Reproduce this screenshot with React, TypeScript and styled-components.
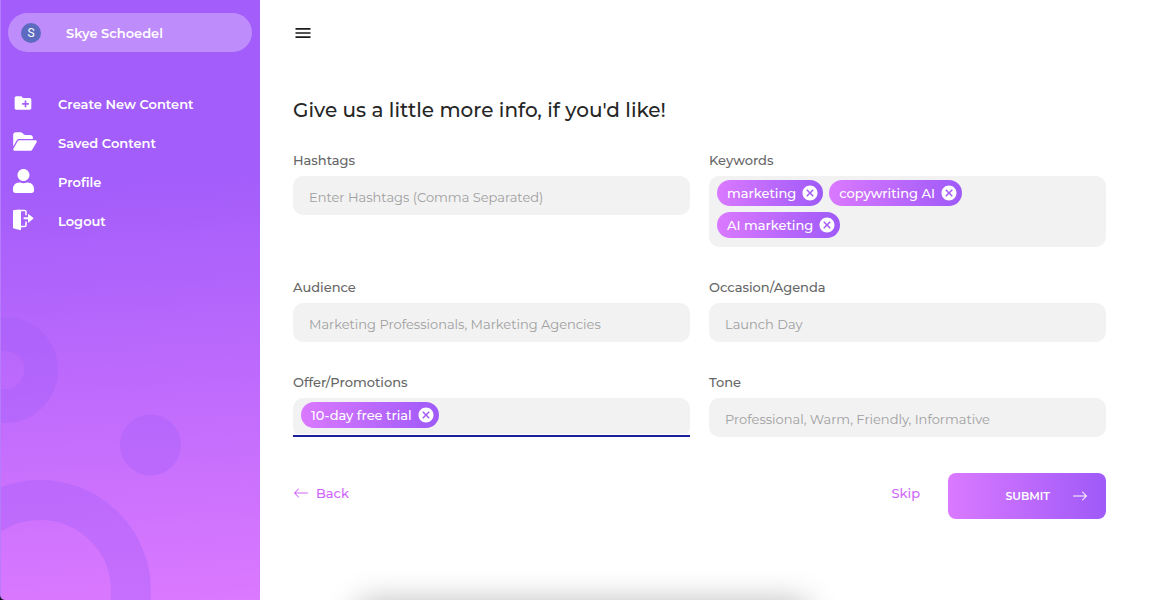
import React, { useState } from "react";
import styled, { createGlobalStyle, css } from "styled-components";
import { MdCancel, MdCreateNewFolder, MdMenu } from "react-icons/md";
import { FaUser } from "react-icons/fa";
import { FaFolderOpen } from "react-icons/fa6";
import { BsArrowLeft, BsArrowRight } from "react-icons/bs";

const GlobalStyle = createGlobalStyle`
  *, *::before, *::after { box-sizing: border-box; }
  body { margin: 0; background: #fff; }
  body, button, input {
    font-family: Montserrat, Inter, "Liberation Sans", sans-serif;
    font-size: 13px;
    line-height: 20px;
  }
  button { border: 0; padding: 0; background: none; cursor: pointer; }
  a { text-decoration: none; color: inherit; }
  svg { display: block; flex: none; }
`;

const Page = styled.div`
  position: relative;
  display: flex;
  min-height: 100vh;
  overflow: hidden;
  background: #14101c;
`;

const Sidebar = styled.aside`
  position: relative;
  flex: 0 0 260px;
  padding: 13px 8px;
  color: #fff;
  font-weight: 600;
  background: linear-gradient(176deg, #a35dfa 0%, #a35dfa 30%, #db79ff 100%);
  border-left: 1px solid #b57dfb;
  border-bottom-left-radius: 5px;
  overflow: hidden;
`;

const Rings = styled.svg`
  position: absolute;
  left: -1px;
  bottom: 0;
`;

const Account = styled.a`
  position: relative;
  display: flex;
  align-items: center;
  gap: 25px;
  height: 39px;
  margin-left: -1px;
  padding: 0 13px;
  border-radius: 20px;
  background: #bf8cfc;
`;

const Avatar = styled.span`
  display: grid;
  place-items: center;
  width: 20px;
  height: 20px;
  border-radius: 50%;
  background: #5c6bc0;
  font-family: Roboto, sans-serif;
  font-size: 12px;
  font-weight: 400;
`;

const Nav = styled.nav`
  position: relative;
  display: flex;
  flex-direction: column;
  margin-top: 32px;
`;

const NavLink = styled.a`
  display: flex;
  align-items: center;
  gap: 22px;
  height: 39px;
  padding-left: 4px;
`;

const NavIcon = styled.span<{ $width: number; $height: number }>`
  display: flex;
  align-items: center;
  width: 23px;
  height: 26px;
  padding-bottom: 2px;

  svg {
    width: ${(p) => p.$width}px;
    height: ${(p) => p.$height}px;
  }
`;

const Main = styled.main`
  flex: 1;
  min-width: 0;
  padding: 23px 59px 40px 33px;
  background: #fff;
`;

const MenuButton = styled.button`
  display: block;
  color: #1c1c1c;
`;

const Title = styled.h1`
  margin: 53px 0 26px;
  font-size: 20px;
  line-height: 28px;
  font-weight: 500;
  color: #262626;
`;

const Fields = styled.div`
  display: grid;
  grid-template-columns: 1fr 1fr;
  gap: 30px 19px;
  align-items: start;
`;

const Label = styled.label`
  display: block;
  margin-bottom: 6px;
  font-weight: 500;
  color: #666;
`;

const box = css`
  width: 100%;
  min-height: 39px;
  border-radius: 10px;
  background: #f2f2f2;
`;

const TextInput = styled.input`
  ${box}
  display: block;
  height: 39px;
  border: 0;
  outline: 0;
  padding: 2px 16px 0;
  color: #333;
  &::placeholder { color: #a0a0a0; opacity: 1; }
`;

const TagBox = styled.div<{ $active?: boolean }>`
  ${box}
  position: relative;
  display: flex;
  flex-wrap: wrap;
  gap: 6px;
  padding: 4px 30px 9px 8px;
  ${(p) =>
    p.$active &&
    css`
      &::after {
        content: "";
        position: absolute;
        left: 0;
        right: 0;
        bottom: 0;
        height: 2px;
        background: #1a1f9c;
        box-shadow: 0 -1px #fff;
      }
    `}
`;

const TagInput = styled.input`
  flex: 1;
  width: 0;
  min-width: 30px;
  height: 26px;
  border: 0;
  outline: 0;
  padding: 0;
  background: transparent;
`;

const brand = css`
  color: #fff;
  background: linear-gradient(90deg, #da79ff, #9f5af8);
`;

const Chip = styled.span`
  ${brand}
  display: flex;
  align-items: center;
  gap: 5px;
  height: 26px;
  padding: 0 4px 0 10px;
  border-radius: 13px;
  font-weight: 500;
`;

const ChipRemove = styled.button`
  color: #fff;
`;

const Actions = styled.div`
  display: flex;
  align-items: flex-start;
  margin-top: 36px;
`;

const TextButton = styled.button<{ $end?: boolean }>`
  display: flex;
  align-items: center;
  gap: 7px;
  height: 40px;
  margin-left: ${(p) => (p.$end ? "auto" : "0")};
  margin-right: ${(p) => (p.$end ? "28px" : "0")};
  color: #cf66fb;
  font-weight: 500;
`;

const SubmitButton = styled.button`
  ${brand}
  display: flex;
  align-items: center;
  justify-content: flex-end;
  gap: 22px;
  width: 158px;
  height: 46px;
  padding-right: 18px;
  border-radius: 8px;
  font-size: 11px;
  font-weight: 600;
`;

const DockShadow = styled.div`
  position: absolute;
  left: 50%;
  top: 100%;
  width: 452px;
  height: 60px;
  transform: translateX(-50%);
  border-radius: 12px;
  box-shadow: 0 0 30px rgba(0, 0, 0, 0.25);
`;

const LogoutIcon = () => (
  <svg viewBox="0 0 21 22" fill="#fff" aria-hidden="true">
    <path d="M1.2 1 7 .4Q8 .4 8 1.4V20.2Q8 21.4 6.9 21.1L.9 19.4Q0 19.1 0 18.2V2.2Q0 1.1 1.2 1Z" />
    <path
      d="M8 1.4H11.6Q13 1.4 13 2.8V6.2M13 12.4V16.2Q13 17.6 11.6 17.6H8"
      fill="none"
      stroke="#fff"
      strokeWidth="1.5"
    />
    <path d="M10.6 8.3H15V5.4Q15 4.6 15.7 5.2L20.2 8.8Q20.7 9.3 20.2 9.8L15.7 13.4Q15 14 15 13.2V10.3H10.6Z" />
  </svg>
);

const navItems = [
  { label: "Create New Content", icon: <MdCreateNewFolder />, width: 20, height: 20 },
  { label: "Saved Content", icon: <FaFolderOpen />, width: 24, height: 21 },
  { label: "Profile", icon: <FaUser />, width: 21, height: 24 },
  { label: "Logout", icon: <LogoutIcon />, width: 21, height: 22 },
];

function TextField({ id, label, placeholder }: { id: string; label: string; placeholder: string }) {
  return (
    <div>
      <Label htmlFor={id}>{label}</Label>
      <TextInput id={id} placeholder={placeholder} />
    </div>
  );
}

function TagField({
  id,
  label,
  initial,
  active,
}: {
  id: string;
  label: string;
  initial: string[];
  active?: boolean;
}) {
  const [tags, setTags] = useState(initial);
  return (
    <div>
      <Label htmlFor={id}>{label}</Label>
      <TagBox $active={active}>
        {tags.map((tag) => (
          <Chip key={tag}>
            {tag}
            <ChipRemove
              type="button"
              aria-label={`Remove ${tag}`}
              onClick={() => setTags(tags.filter((t) => t !== tag))}
            >
              <MdCancel size={18} />
            </ChipRemove>
          </Chip>
        ))}
        <TagInput id={id} />
      </TagBox>
    </div>
  );
}

export default function App() {
  return (
    <>
      <GlobalStyle />
      <Page>
        <Sidebar>
          <Rings width="260" height="300" viewBox="0 0 260 300" fill="none" aria-hidden="true">
            <g stroke="#a35dfa" strokeOpacity="0.36">
              <circle cx="5" cy="70" r="36" strokeWidth="34" />
              <circle cx="40" cy="291" r="91" strokeWidth="40" />
            </g>
            <circle cx="150.5" cy="145" r="30.5" fill="#a35dfa" fillOpacity="0.36" />
          </Rings>
          <Account href="#account">
            <Avatar>S</Avatar>
            Skye Schoedel
          </Account>
          <Nav>
            {navItems.map(({ label, icon, width, height }) => (
              <NavLink href="#" key={label}>
                <NavIcon $width={width} $height={height}>
                  {icon}
                </NavIcon>
                {label}
              </NavLink>
            ))}
          </Nav>
        </Sidebar>
        <Main>
          <MenuButton type="button" aria-label="Toggle menu">
            <MdMenu size={20} />
          </MenuButton>
          <Title>Give us a little more info, if you'd like!</Title>
          <form onSubmit={(e) => e.preventDefault()}>
            <Fields>
              <TextField id="hashtags" label="Hashtags" placeholder="Enter Hashtags (Comma Separated)" />
              <TagField id="keywords" label="Keywords" initial={["marketing", "copywriting AI", "AI marketing"]} />
              <TextField id="audience" label="Audience" placeholder="Marketing Professionals, Marketing Agencies" />
              <TextField id="occasion" label="Occasion/Agenda" placeholder="Launch Day" />
              <TagField id="offer" label="Offer/Promotions" initial={["10-day free trial"]} active />
              <TextField id="tone" label="Tone" placeholder="Professional, Warm, Friendly, Informative" />
            </Fields>
            <Actions>
              <TextButton type="button">
                <BsArrowLeft size={16} />
                Back
              </TextButton>
              <TextButton type="button" $end>
                Skip
              </TextButton>
              <SubmitButton type="submit">
                SUBMIT
                <BsArrowRight size={16} />
              </SubmitButton>
            </Actions>
          </form>
        </Main>
        <DockShadow />
      </Page>
    </>
  );
}
